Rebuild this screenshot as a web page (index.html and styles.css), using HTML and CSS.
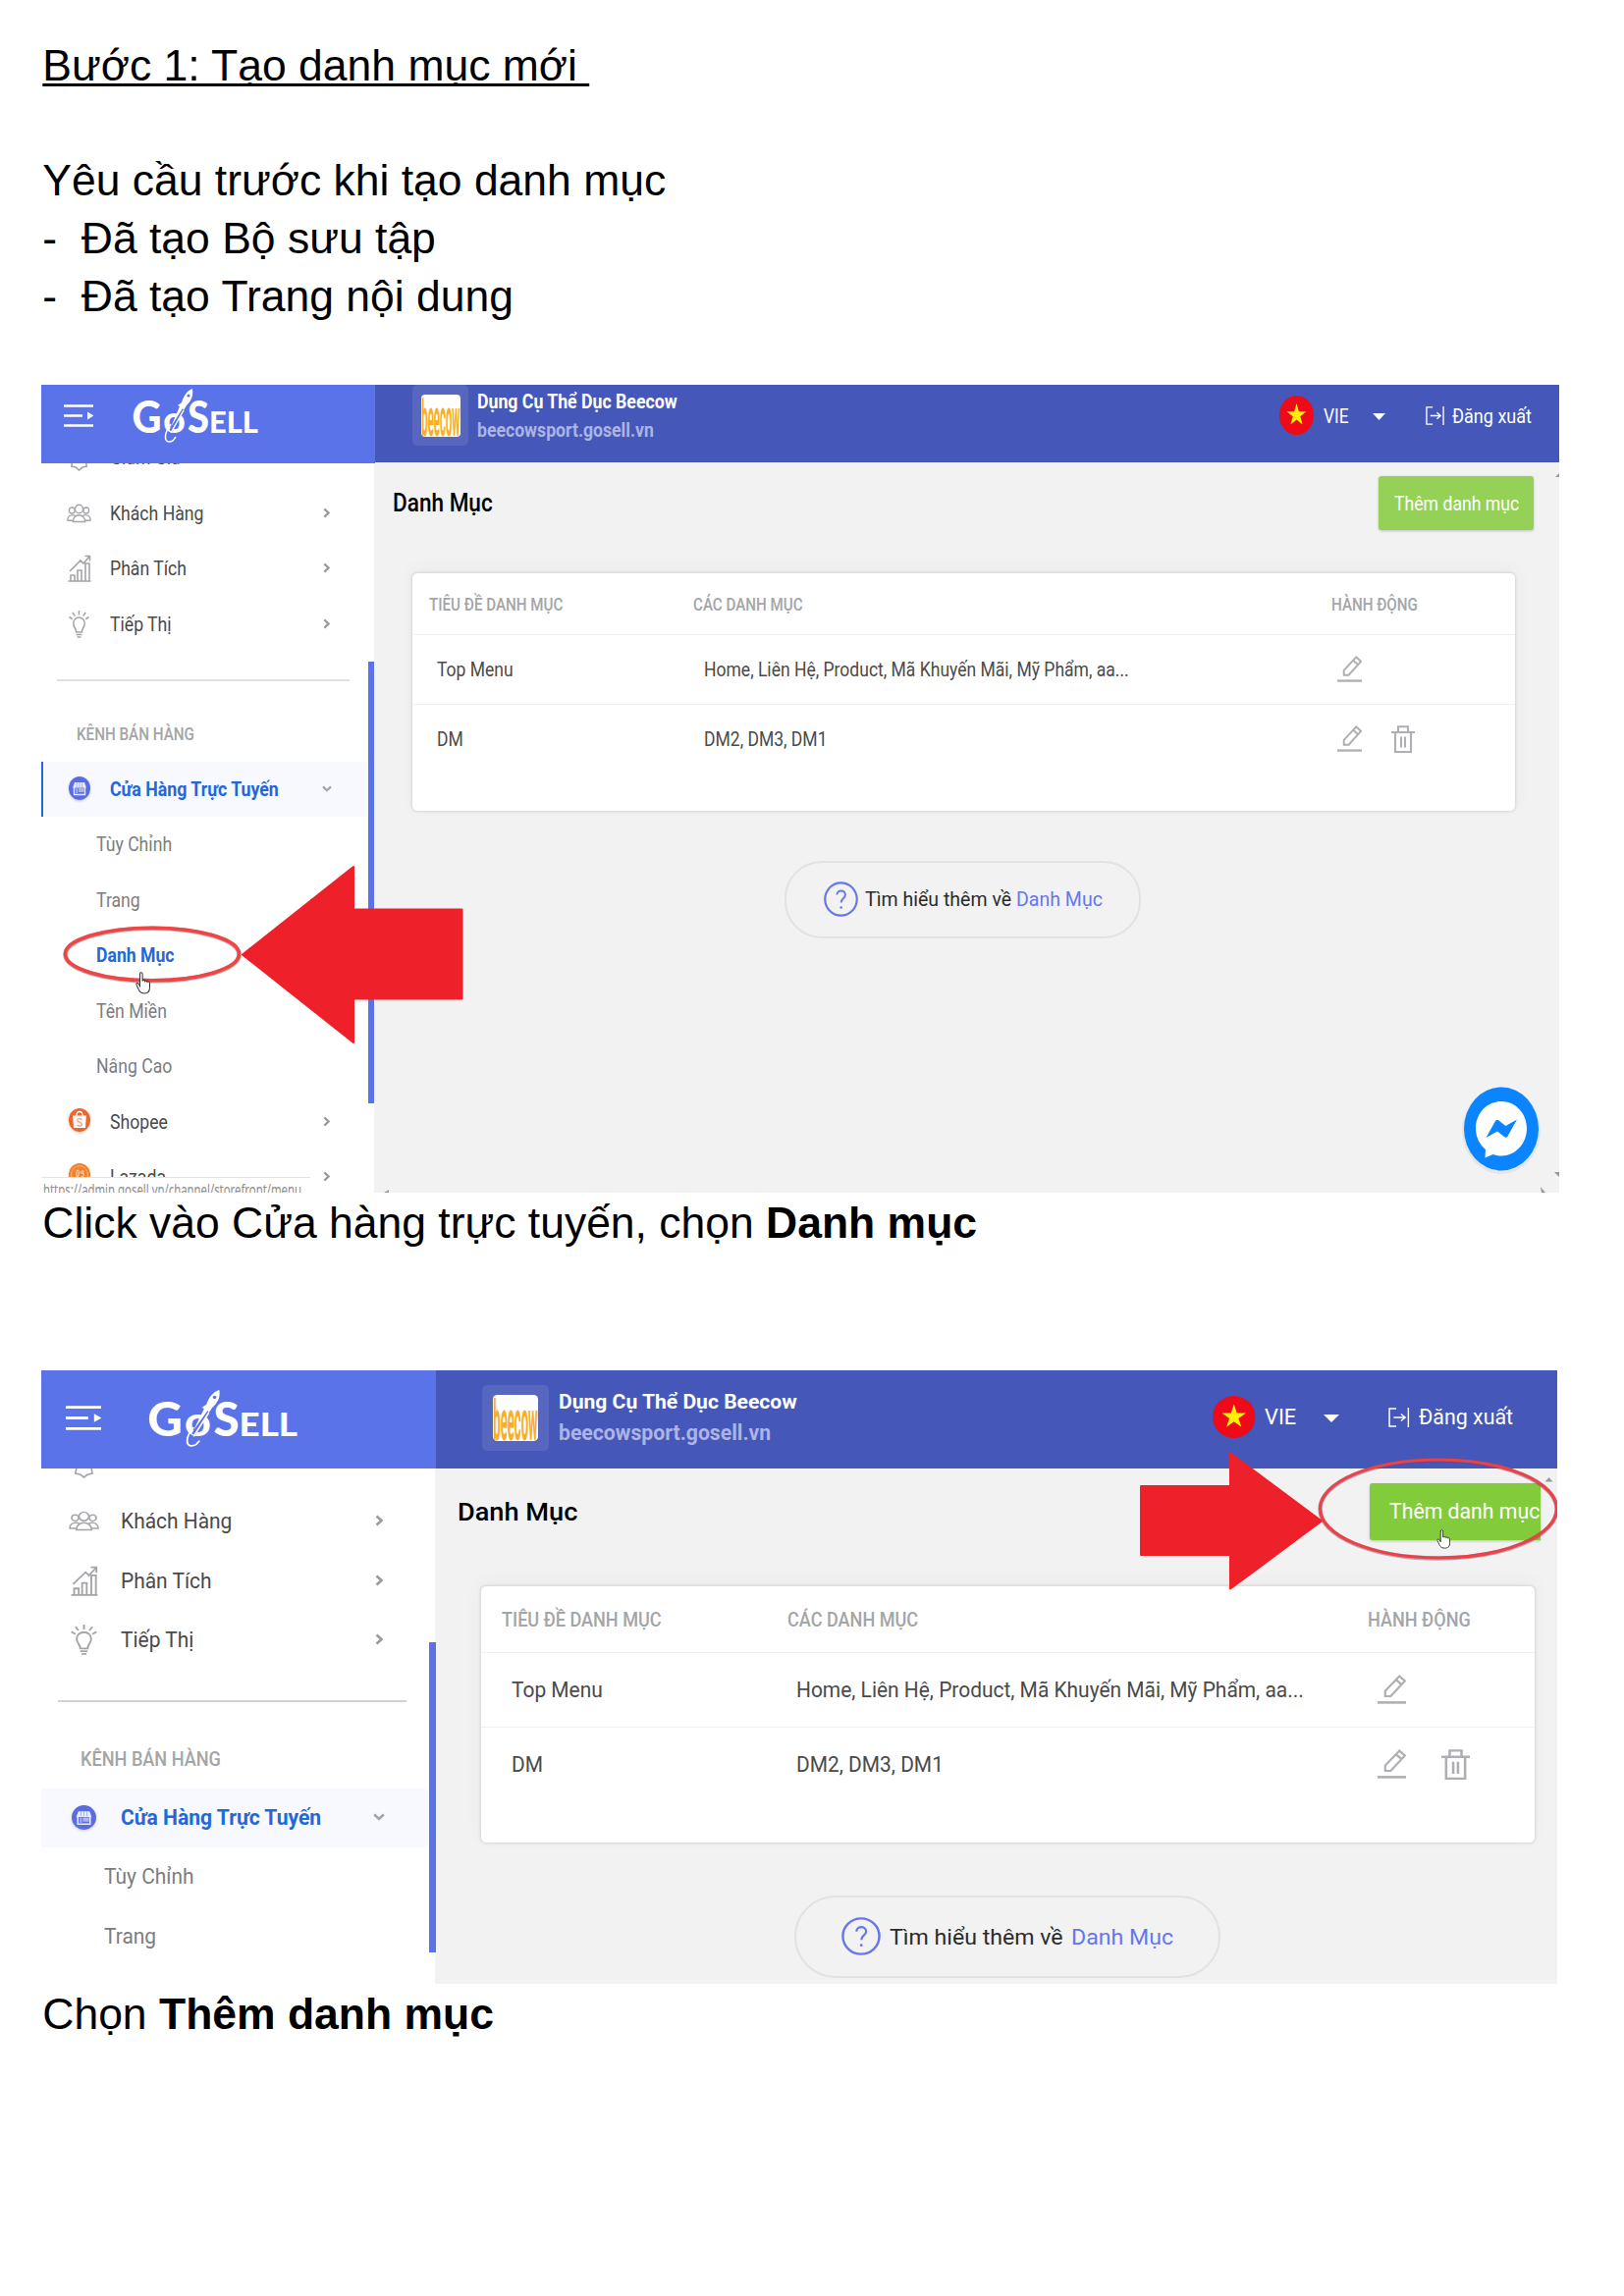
FILE: index.html
```html
<!DOCTYPE html>
<html lang="vi">
<head>
<meta charset="utf-8">
<title>Tạo danh mục mới</title>
<link rel="stylesheet" href="styles.css">
</head>
<body>
<svg class="sprite" aria-hidden="true">
  <symbol id="menu" viewBox="0 0 30 23" preserveAspectRatio="none"><path d="M0 1.500h30M0 11.500h19M0 21.500h30" stroke="#fff" stroke-width="2.600" fill="none"/><path d="M24 7.500l6.500 4-6.500 4z" fill="#fff"/></symbol>
  <symbol id="rocket" viewBox="0 0 127 56" preserveAspectRatio="none">
    <path d="M50 20L38 43" stroke="#5b73e8" stroke-width="3.600"/>
    <path d="M60 0c-6 2-9 8-11 14l-4 3 2 1-9 21 12-19 1 2 3-5c5-5 7-10 6-17z" fill="#fff"/>
    <circle cx="56" cy="7" r="1.600" fill="#5b73e8"/>
    <path d="M51 22L38 45M38 36c-7 9-7 18-2 18 4 0 5-2 7-5" fill="none" stroke="#fff" stroke-width="1.500"/>
  </symbol>
  <symbol id="people" viewBox="0 0 26 20" preserveAspectRatio="none"><g fill="#fff" stroke="#a3a5a8" stroke-width="1.400"><circle cx="5.500" cy="7" r="3"/><circle cx="20.500" cy="7" r="3"/><path d="M.8 17.500c0-7 8-7 9-3.500M25.200 17.500c0-7-8-7-9-3.500M.8 17.200h6M25.200 17.200h-6"/><circle cx="13" cy="5.500" r="4.200"/><path d="M6.500 18.500c0-9 13-9 13 0z"/></g></symbol>
  <symbol id="chart" viewBox="0 0 24 28" preserveAspectRatio="none"><g fill="none" stroke="#a3a5a8" stroke-width="1.600"><path d="M.5 27h23M3 27v-6h4v6M10 27V16h4v11M18 27V9h4v18M2 17L13 6l3 3 6-7M17.500 1.500h5v5"/></g></symbol>
  <symbol id="bulb" viewBox="0 0 22 28" preserveAspectRatio="none"><g fill="none" stroke="#a3a5a8" stroke-width="1.600"><path d="M8 22c0-4-3-4.500-3-9a6 6 0 0 1 12 0c0 4.500-3 5-3 9zM8 24.500h6M9 27h4M11 0v4.500M4 2l2.500 3.500M18 2l-2.500 3.500M.5 6.500l3.500 2.200M21.500 6.500L18 8.700"/></g></symbol>
  <symbol id="tag" viewBox="0 0 22 22" preserveAspectRatio="none"><path d="M4 1h14v4l3 3-2 4 1 5-5 1-4 3-4-3-5-1 1-5-2-4 3-3z" fill="none" stroke="#a3a5a8" stroke-width="1.700"/></symbol>
  <symbol id="right" viewBox="0 0 8 12" preserveAspectRatio="none"><path d="M1.500 1.500L6.500 6l-5 4.500" fill="none" stroke="#9a9c9e" stroke-width="2.600"/></symbol>
  <symbol id="down" viewBox="0 0 12 8" preserveAspectRatio="none"><path d="M1.200 1.500L6 6l4.800-4.500" fill="none" stroke="#a3a5a8" stroke-width="2.600"/></symbol>
  <symbol id="store" viewBox="0 0 24 24" preserveAspectRatio="none"><circle cx="12" cy="12" r="12" fill="#5b6be0"/><path d="M6.500 6h11l2 5.500h-15z" fill="#e9ecff"/><path d="M6 11v7.500h12V11" fill="none" stroke="#e9ecff" stroke-width="1.500"/><path d="M8 12h2v5H8zM11 12h6v4h-6z" fill="#a9b3f2"/><path d="M9 6v5M12 6v5M15 6v5" stroke="#8f9bee" stroke-width=".7"/></symbol>
  <symbol id="shopee" viewBox="0 0 24 24" preserveAspectRatio="none"><circle cx="12" cy="12" r="12" fill="#f0642d"/><path d="M4.500 7.500h15l-1 12.500h-13z" fill="#fff"/><path d="M8.500 8c0-6 7-6 7 0" fill="none" stroke="#fff" stroke-width="1.300"/><path d="M14.500 11.500c-1.500-1.500-5-1.200-5 .8 0 2.500 5.200 1.500 5.200 4 0 2.200-3.800 2.200-5.500.7" fill="none" stroke="#f49a7a" stroke-width="1.200"/></symbol>
  <symbol id="lazada" viewBox="0 0 24 24" preserveAspectRatio="none"><circle cx="12" cy="12" r="12" fill="#f5802a"/><circle cx="12" cy="12" r="9.300" fill="none" stroke="#f9b27c" stroke-width="1"/><path d="M8 15c4-1 4-8 2-8s-2 9 1 9M13 10c2-4 5-2 2 0 3 0 2 5-2 4" fill="none" stroke="#fbd2b0" stroke-width="1.200"/></symbol>
  <symbol id="flag" viewBox="0 0 40 40" preserveAspectRatio="none"><circle cx="20" cy="20" r="20" fill="#ee0a19"/><path d="M20 8l2.700 8.200h8.600l-7 5.100 2.700 8.300-7-5.100-7 5.100 2.700-8.300-7-5.100h8.600z" fill="#ffef00"/></symbol>
  <symbol id="caret" viewBox="0 0 14 8" preserveAspectRatio="none"><path d="M0 0h14L7 8z" fill="#fff"/></symbol>
  <symbol id="logout" viewBox="0 0 20 20" preserveAspectRatio="none"><path d="M7.500 1H1v18h6.500M5 10h10M12 6.500l4 3.500-4 3.500M19 0v20" fill="none" stroke="#fff" stroke-width="1.400"/></symbol>
  <symbol id="edit" viewBox="0 0 26 28" preserveAspectRatio="none"><g fill="none" stroke="#adafb2" stroke-width="2"><path d="M0 26.500h26" stroke-width="2.400"/><path d="M7 20.500v-5L20 1.500l5 4.500-13 14.500zM17 5l4.500 4"/></g></symbol>
  <symbol id="trash" viewBox="0 0 24 28" preserveAspectRatio="none"><g fill="none" stroke="#adafb2" stroke-width="2.100"><path d="M0 7h24M4 7v20h16V7M7 6.500V1.200h10v5.300M10 11.500v11M14 11.500v11"/></g></symbol>
  <symbol id="help" viewBox="0 0 36 36" preserveAspectRatio="none"><circle cx="18" cy="18" r="16.700" fill="none" stroke="#6577ea" stroke-width="2.200"/><path d="M13.800 13.500c0-5.500 8.800-5.500 8.800 0 0 3.500-4.400 3.500-4.400 8" fill="none" stroke="#6577ea" stroke-width="2"/><circle cx="18.200" cy="26.500" r="1.300" fill="#6577ea"/></symbol>
  <symbol id="hand" viewBox="0 0 16 22" preserveAspectRatio="none"><path d="M5 14V2.200c0-2 2.600-2 2.600 0V9c.5-1.200 2.300-1 2.500.3.600-1 2.300-.7 2.400.6.800-.8 2.500-.4 2.500 1.100v4c0 4-1.500 6-5.500 6-4.500 0-5-2-8-8.500-.6-1.500 1.500-2 2.300-.6z" fill="#fff" stroke="#333" stroke-width="1"/></symbol>
</svg>

<main class="page">
  <h1 class="line title">Bước 1: Tạo danh mục mới&nbsp;</h1>
  <p class="line lead">Yêu cầu trước khi tạo danh mục</p>
  <p class="line">-&nbsp; Đã tạo Bộ sưu tập</p>
  <p class="line">-&nbsp; Đã tạo Trang nội dung</p>

  <section class="shot shot-a">
    <aside class="side">
      <header class="side-top">
        <svg class="i-menu"><use href="#menu"/></svg>
        <svg class="i-logo" viewBox="0 0 127 56" preserveAspectRatio="none">
          <text x="-1.500" y="45" font-size="46" textLength="30" lengthAdjust="spacingAndGlyphs">G</text>
          <text x="30" y="45" font-size="39" font-weight="700" textLength="23" lengthAdjust="spacingAndGlyphs">o</text>
          <text x="55" y="45" font-size="46" textLength="22" lengthAdjust="spacingAndGlyphs">S</text>
          <text x="77" y="44.500" font-size="31" textLength="50" lengthAdjust="spacingAndGlyphs">ELL</text>
          <use href="#rocket" width="127" height="56"/>
        </svg>
      </header>
      <nav class="nav">
        <div class="row first"><svg class="i-tag"><use href="#tag"/></svg><span class="t">Giảm Giá</span></div>
        <div class="row"><svg class="i-people"><use href="#people"/></svg><span class="t">Khách Hàng</span><svg class="i-right"><use href="#right"/></svg></div>
        <div class="row"><svg class="i-chart"><use href="#chart"/></svg><span class="t">Phân Tích</span><svg class="i-right"><use href="#right"/></svg></div>
        <div class="row"><svg class="i-bulb"><use href="#bulb"/></svg><span class="t">Tiếp Thị</span><svg class="i-right"><use href="#right"/></svg></div>
        <hr class="rule">
        <div class="group"><span class="t">KÊNH BÁN HÀNG</span></div>
        <div class="row low active"><svg class="i-round"><use href="#store"/></svg><span class="t">Cửa Hàng Trực Tuyến</span><svg class="i-down"><use href="#down"/></svg></div>
        <div class="sub"><span class="t">Tùy Chỉnh</span></div>
        <div class="sub"><span class="t">Trang</span></div>
        <div class="sub current"><span class="t">Danh Mục</span></div>
        <div class="sub"><span class="t">Tên Miền</span></div>
        <div class="sub"><span class="t">Nâng Cao</span></div>
        <div class="row low"><svg class="i-round"><use href="#shopee"/></svg><span class="t">Shopee</span><svg class="i-right"><use href="#right"/></svg></div>
        <div class="row low"><svg class="i-round"><use href="#lazada"/></svg><span class="t">Lazada</span><svg class="i-right"><use href="#right"/></svg></div>
      </nav>
      <i class="thumb"></i>
      <div class="status"><span class="t">https://admin.gosell.vn/channel/storefront/menu</span></div>
    </aside>
    <div class="main">
      <header class="bar">
        <span class="tile"><svg class="i-shop" viewBox="0 0 40 44" preserveAspectRatio="none"><rect width="40" height="44" rx="4"/><text x=".3" y="10.100" transform="scale(1 4.300)" font-size="12.500" textLength="39.400" lengthAdjust="spacingAndGlyphs">beecow</text></svg></span>
        <div class="shop"><b><span class="t">Dụng Cụ Thể Dục Beecow</span></b><small><span class="t">beecowsport.gosell.vn</span></small></div>
        <svg class="i-flag"><use href="#flag"/></svg><span class="lang"><span class="t">VIE</span></span><svg class="i-caret"><use href="#caret"/></svg>
        <svg class="i-logout"><use href="#logout"/></svg><span class="t exit">Đăng xuất</span>
      </header>
      <div class="head"><h2><span class="t">Danh Mục</span></h2><a class="add"><span class="t">Thêm danh mục</span></a></div>
      <div class="card">
        <div class="tr th"><span class="t">TIÊU ĐỀ DANH MỤC</span><span class="t">CÁC DANH MỤC</span><span class="t">HÀNH ĐỘNG</span></div>
        <div class="tr td"><span class="t">Top Menu</span><span class="t">Home, Liên Hệ, Product, Mã Khuyến Mãi, Mỹ Phẩm, aa...</span><span class="acts"><svg class="i-edit"><use href="#edit"/></svg></span></div>
        <div class="tr td"><span class="t">DM</span><span class="t">DM2, DM3, DM1</span><span class="acts"><svg class="i-edit"><use href="#edit"/></svg><svg class="i-trash"><use href="#trash"/></svg></span></div>
      </div>
      <div class="pill"><svg class="i-help"><use href="#help"/></svg><span class="t">Tìm hiểu thêm về</span><a class="t">Danh Mục</a></div>
    </div>
    <svg class="marks" viewBox="0 0 1546 823">
      <ellipse cx="113" cy="580.500" rx="88.500" ry="26.800" fill="none" stroke="#8a4a4a" stroke-opacity=".45" stroke-width="4.600"/>
      <ellipse cx="113" cy="580" rx="88.500" ry="26.800" fill="none" stroke="#f04545" stroke-width="3.600"/>
      <path d="M205 580.500L318 491v43.500h110.500v91H318V670z" fill="#ee2029" stroke="#ee2029" stroke-width="2" stroke-linejoin="round"/>
      <use href="#hand" x="95.500" y="598" width="16" height="23"/>
      <ellipse cx="1487" cy="760" rx="40" ry="44" fill="#000" opacity=".05"/>
      <ellipse cx="1487" cy="758" rx="38" ry="42.500" fill="#0a84ff"/>
      <path d="M1487 730c14.500 0 26 12 26 27.500s-11.500 28-26 28c-3 0-6-.6-8.500-1.500l-8 3.500.5-8.500c-6-5-10-12.500-10-21.500 0-15.500 11.500-27.500 26-27.500z" fill="#fff"/>
      <path d="M1471.500 767l9.500-17c1-1.500 2.500-1.500 3.500-.5l7 5.500 11.500-6.500-9.500 17c-1 1.500-2.500 1.500-3.500.5l-7-5.500z" fill="#0a84ff"/>
      <path d="M1546 90v4h-4zM1541 802h5v5zM1527 817l5 6h-4zM349 823l5-3v3z" fill="#999"/>
    </svg>
  </section>

  <p class="line">Click vào Cửa hàng trực tuyến, chọn <strong>Danh mục</strong></p>

  <section class="shot shot-b">
    <aside class="side">
      <header class="side-top">
        <svg class="i-menu"><use href="#menu"/></svg>
        <svg class="i-logo" viewBox="0 0 127 56" preserveAspectRatio="none">
          <text x="-1.500" y="45" font-size="46" textLength="30" lengthAdjust="spacingAndGlyphs">G</text>
          <text x="30" y="45" font-size="39" font-weight="700" textLength="23" lengthAdjust="spacingAndGlyphs">o</text>
          <text x="55" y="45" font-size="46" textLength="22" lengthAdjust="spacingAndGlyphs">S</text>
          <text x="77" y="44.500" font-size="31" textLength="50" lengthAdjust="spacingAndGlyphs">ELL</text>
          <use href="#rocket" width="127" height="56"/>
        </svg>
      </header>
      <nav class="nav">
        <div class="row first"><svg class="i-tag"><use href="#tag"/></svg></div>
        <div class="row"><svg class="i-people"><use href="#people"/></svg><span class="t">Khách Hàng</span><svg class="i-right"><use href="#right"/></svg></div>
        <div class="row"><svg class="i-chart"><use href="#chart"/></svg><span class="t">Phân Tích</span><svg class="i-right"><use href="#right"/></svg></div>
        <div class="row"><svg class="i-bulb"><use href="#bulb"/></svg><span class="t">Tiếp Thị</span><svg class="i-right"><use href="#right"/></svg></div>
        <hr class="rule">
        <div class="group"><span class="t">KÊNH BÁN HÀNG</span></div>
        <div class="row low active"><svg class="i-round"><use href="#store"/></svg><span class="t">Cửa Hàng Trực Tuyến</span><svg class="i-down"><use href="#down"/></svg></div>
        <div class="sub"><span class="t">Tùy Chỉnh</span></div>
        <div class="sub"><span class="t">Trang</span></div>
      </nav>
      <i class="thumb"></i>
    </aside>
    <div class="main">
      <header class="bar">
        <span class="tile"><svg class="i-shop" viewBox="0 0 40 44" preserveAspectRatio="none"><rect width="40" height="44" rx="4"/><text x=".3" y="10.100" transform="scale(1 4.300)" font-size="12.500" textLength="39.400" lengthAdjust="spacingAndGlyphs">beecow</text></svg></span>
        <div class="shop"><b><span class="t">Dụng Cụ Thể Dục Beecow</span></b><small><span class="t">beecowsport.gosell.vn</span></small></div>
        <svg class="i-flag"><use href="#flag"/></svg><span class="lang"><span class="t">VIE</span></span><svg class="i-caret"><use href="#caret"/></svg>
        <svg class="i-logout"><use href="#logout"/></svg><span class="t exit">Đăng xuất</span>
      </header>
      <div class="head"><h2><span class="t">Danh Mục</span></h2><a class="add"><span class="t">Thêm danh mục</span></a></div>
      <div class="card">
        <div class="tr th"><span class="t">TIÊU ĐỀ DANH MỤC</span><span class="t">CÁC DANH MỤC</span><span class="t">HÀNH ĐỘNG</span></div>
        <div class="tr td"><span class="t">Top Menu</span><span class="t">Home, Liên Hệ, Product, Mã Khuyến Mãi, Mỹ Phẩm, aa...</span><span class="acts"><svg class="i-edit"><use href="#edit"/></svg></span></div>
        <div class="tr td"><span class="t">DM</span><span class="t">DM2, DM3, DM1</span><span class="acts"><svg class="i-edit"><use href="#edit"/></svg><svg class="i-trash"><use href="#trash"/></svg></span></div>
      </div>
      <div class="pill"><svg class="i-help"><use href="#help"/></svg><span class="t">Tìm hiểu thêm về</span><a class="t">Danh Mục</a></div>
    </div>
    <svg class="marks" viewBox="0 0 1544 625">
      <ellipse cx="1423" cy="141.500" rx="120.500" ry="50" fill="none" stroke="#6a4a6a" stroke-opacity=".45" stroke-width="4.400"/>
      <ellipse cx="1423" cy="141" rx="120.500" ry="50" fill="none" stroke="#ee4146" stroke-width="3.200"/>
      <path d="M1120 118h91V84.500l93 69-93 69V188h-91z" fill="#ee2029" stroke="#ee2029" stroke-width="2" stroke-linejoin="round"/>
      <use href="#hand" x="1420.500" y="162" width="15" height="20"/>
      <path d="M1531.500 113.500h8l-4-4.500z" fill="#999"/>
    </svg>
  </section>

  <p class="line">Chọn <strong>Thêm danh mục</strong></p>
</main>
</body>
</html>
```
FILE: styles.css
```css
* { box-sizing: border-box; }
body { margin: 0; background: #fff; font-family: "Liberation Sans", Arial, sans-serif; color: #000; }
svg { display: block; flex: none; overflow: visible; }
.sprite { display: none; }

.page { width: 1654px; padding: 37.900px 0 0 43.300px; }
.line { margin: 0; height: 58.800px; line-height: 58.800px; font-size: 44.480px; font-weight: 400; white-space: nowrap; }
.title { text-decoration: underline; text-decoration-thickness: 3px; text-underline-offset: 3px; text-decoration-skip-ink: none; }
.lead { margin-top: 58.800px; }

.shot { position: relative; display: flex; overflow: hidden; margin-left: -1.300px; font-family: Roboto, sans-serif; font-size: var(--fs); background: #fff; }
.shot-a {
  width: 1546px; height: 823px; margin-top: 60.100px; margin-bottom: 2.500px;
  --fs: 20.800px; --side: 340px; --top: 80px; --row: 56.600px; --low: 56.400px; --squeeze: .848;
}
.shot-b {
  width: 1544px; height: 625px; margin-top: 119.500px; margin-bottom: 2.500px;
  --fs: 21.800px; --side: 402px; --top: 100px; --row: 60.500px; --low: 60.500px; --squeeze: .960;
}
/* condensed labels: each area sets its own horizontal squeeze */
.t { display: inline-block; white-space: nowrap; transform: scaleX(var(--squeeze)); transform-origin: 0 50%; }
.shot-a .group { --squeeze: .813; }
.shot-a .active { --squeeze: .853; }
.shot-a .status { --squeeze: .668; }
.shot-a .shop b { --squeeze: .907; }
.shot-a .shop small { --squeeze: .882; }
.shot-a .lang { --squeeze: .867; }
.shot-a .exit { --squeeze: .900; }
.shot-a h2 { --squeeze: .903; }
.shot-a .add { --squeeze: .882; }
.shot-a .th { --squeeze: .811; }
.shot-a .td { --squeeze: .876; }
.shot-a .pill { --squeeze: .930; }
.shot-b .group { --squeeze: .929; }
.shot-b .active { --squeeze: .967; }
.shot-b .shop b { --squeeze: 1.004; }
.shot-b .shop small { --squeeze: .986; }
.shot-b .lang { --squeeze: 1; }
.shot-b .exit { --squeeze: .980; }
.shot-b h2 { --squeeze: 1.025; }
.shot-b .add { --squeeze: .975; }
.shot-b .th { --squeeze: .927; }
.shot-b .pill { --squeeze: 1.028; }

/* sidebar */
.side { position: relative; flex: none; width: var(--side); }
.side-top { position: relative; z-index: 1; display: flex; height: var(--top); background: #5b73e8; }
.i-logo { fill: #fff; font-family: Lato, sans-serif; font-weight: 900; }
.shot-a .i-menu { width: 30px; height: 23px; margin: 20px 0 0 23px; }
.shot-a .i-logo { width: 127px; height: 56px; margin: 4px 0 0 41px; }
.shot-b .i-menu { width: 36px; height: 25px; margin: 36px 0 0 25px; }
.shot-b .i-logo { width: 151px; height: 59px; margin: 20px 0 0 49px; }
.row { display: grid; align-items: center; justify-items: center; height: var(--row); color: #4a4a4a; }
.row .t { justify-self: start; }
.low { height: var(--low); }
.shot-a .row { grid-template-columns: 18.500px 40px 11.500px 214px 13px; }
.shot-b .row { grid-template-columns: 22.500px 42px 16.500px 256px 14px; }
.row > :nth-child(1) { grid-column: 2; }
.row > :nth-child(2) { grid-column: 4; }
.row > :nth-child(3) { grid-column: 5; }
.shot-a .first { margin-top: -34px; }
.shot-b .first { margin-top: -36.700px; }
.i-tag { width: 19px; height: 22px; align-self: end; margin-bottom: 15px; }
.i-people { width: 25px; height: 20px; }
.i-chart { width: 24px; height: 28px; }
.i-bulb { width: 21px; height: 28px; }
.i-round { width: 22px; height: 24px; margin-top: -3px; border-radius: 50%; box-shadow: 0 1px 3px rgba(0,0,0,.2); }
.i-right { width: 7px; height: 11px; margin-top: -1px; }
.i-down { width: 10px; height: 7px; margin-top: -2px; }
.shot-b .i-tag { width: 21px; margin-bottom: 14px; }
.shot-b .i-people { width: 31px; height: 21px; }
.shot-b .i-chart { width: 28px; height: 31px; }
.shot-b .i-bulb { width: 27px; height: 31px; }
.shot-b .i-round { width: 25px; height: 25px; margin-top: -1px; }
.shot-b .i-right { width: 8px; height: 12px; }
.shot-b .i-down { width: 12px; height: 8px; }
.rule { border: 0; height: 1.500px; background: #e0e0e0; }
.shot-a .rule { width: 298px; margin: 28px 0 25px 16px; }
.shot-b .rule { width: 355px; margin: 31px 0 29.500px 17px; background: #d2d2d2; }
.group { color: #a3a5a7; font-weight: 500; white-space: nowrap; }
.shot-a .group { height: 57.200px; line-height: 58.500px; padding-left: 35.500px; font-size: 18.700px; }
.shot-b .group { height: 58.500px; line-height: 59.500px; padding-left: 39.500px; font-size: 19.500px; }
.active { margin-right: 8px; background: #f7f9fe; color: #2268d8; font-weight: 700; }
.shot-a .active { box-shadow: inset 2px 0 #2268d8; }
.sub { height: var(--low); line-height: var(--low); color: #7c7d80; }
.shot-a .sub { padding-left: 56px; }
.shot-b .sub { padding-left: 64px; }
.current { color: #2268d8; font-weight: 700; }
.thumb { position: absolute; z-index: 1; background: #5b73e8; }
.shot-a .thumb { left: 333px; top: 282px; width: 6px; height: 450px; }
.shot-b .thumb { left: 394.500px; top: 277px; width: 7px; height: 316px; }
.status { position: absolute; left: 0; bottom: 0; z-index: 1; width: 274px; height: 16px; overflow: hidden; padding-left: 1.500px; background: #fff; border-top: 1.500px solid #e4e4e4; color: #8d8d8d; font: 17px/24px "Noto Sans", sans-serif; }

/* main column */
.main { flex: 1; min-width: 0; margin-left: -1.500px; background: #f2f2f2; }
.bar { display: grid; align-items: center; margin-left: 1.500px; background: #4557b9; color: #fff; }
.shot-a .bar { height: 79px; grid-template-columns: 57px 826px 45px 50px 54px 27px 1fr; padding: 0 0 16px 38px; }
.shot-b .bar { height: 100px; grid-template-columns: 67.500px 676px 53.500px 60px 65.500px 31.500px 1fr; padding: 0 0 3px 47px; }
.tile { display: grid; place-items: center; background: #5767bf; border-radius: 5px; }
.i-shop { font-family: Roboto, sans-serif; font-weight: 700; }
.i-shop rect { fill: #fff; }
.i-shop text { fill: #f9ae25; }
.shot-a .tile { width: 57px; height: 62px; }
.shot-a .i-shop { width: 40px; height: 43px; }
.shot-b .tile { width: 67.500px; height: 67px; }
.shot-b .i-shop { width: 46px; height: 47px; }
.shop { align-self: start; }
.shop b, .shop small { display: block; font-weight: 700; white-space: nowrap; }
.shop small { color: #acb4e4; }
.shot-a .shop { padding: 3px 0 0 9px; font-size: 19.500px; line-height: 29.300px; }
.shot-a .shop small { font-size: 20px; }
.shot-b .shop { padding: 17px 0 0 10.500px; font-size: 21px; line-height: 31.300px; }
.shot-b .shop small { font-size: 21.500px; }
.shot-a .i-flag { width: 35px; height: 40px; }
.shot-a .i-caret { width: 13px; height: 7px; margin-top: 2px; }
.shot-a .i-logout { width: 19px; height: 19px; }
.shot-a .exit, .shot-a .lang { font-size: 20px; margin-top: 1px; }
.shot-b .i-flag { width: 43.500px; height: 43px; margin-top: -1px; }
.shot-b .i-caret { width: 16px; height: 8px; margin-top: 1px; }
.shot-b .i-logout { width: 21.500px; height: 20px; }
.shot-b .exit, .shot-b .lang { margin-top: -1px; }
.head { display: flex; justify-content: space-between; }
h2 { margin: 0; font-weight: 500; white-space: nowrap; }
.add { display: block; color: #fff; white-space: nowrap; border-radius: 3px; box-shadow: 0 1px 3px rgba(0,0,0,.2); }
.shot-a .head { padding: 14.500px 26px 0 19px; }
.shot-a h2 { font-size: 25px; line-height: 56px; height: 54.500px; }
.shot-a .add { width: 158.500px; height: 54.500px; line-height: 56px; padding-left: 16.500px; background: #95d157; font-size: 20px; }
.shot-b .head { padding: 15px 17px 0 23.500px; height: 75px; }
.shot-b h2 { font-size: 26.500px; line-height: 58px; }
.shot-b .add { width: 174px; height: 58px; line-height: 58px; padding-left: 19.500px; background: #82cc3b; border-radius: 3px 0 0 3px; }
.card { background: #fff; border: 1px solid #dedede; border-radius: 6px; box-shadow: 0 0 3px rgba(0,0,0,.1), 0 -5px 20px rgba(0,0,0,.03); }
.tr { display: grid; align-items: center; }
.tr + .tr { border-top: 1.500px solid #f0f0f0; }
.tr > * { justify-self: start; }
.th { color: #a3a5a7; font-weight: 500; }
.td { color: #4a4a4a; }
.acts { display: flex; }
.shot-a .card { width: 1125px; height: 243.500px; margin: 43.500px 0 0 38px; }
.shot-a .th { height: 62px; padding-top: 2px; grid-template-columns: 269px 649.500px 1fr; padding-left: 17.500px; font-size: 18.700px; }
.shot-a .td { height: 71px; grid-template-columns: 272px 644.500px 1fr; padding-left: 25.500px; font-size: 20px; }
.shot-a .i-edit { width: 25px; height: 27px; margin-top: -1px; }
.shot-a .i-trash { width: 24px; height: 28px; margin-left: 30px; margin-top: -1px; }
.shot-b .card { width: 1075px; height: 263px; margin: 44.500px 0 0 46.500px; }
.shot-b .th { height: 67px; padding-top: 2px; grid-template-columns: 291px 591px 1fr; padding-left: 21px; font-size: 19.500px; }
.shot-b .td { height: 76px; grid-template-columns: 290px 592px 1fr; padding-left: 31px; }
.shot-b .i-edit { width: 29px; height: 30px; margin-top: -1px; }
.shot-b .i-trash { width: 29px; height: 31px; margin-left: 36px; margin-top: -1px; }
.pill { display: grid; align-items: center; justify-items: start; border: 2px solid #e2e2e2; color: #2b2b2b; }
.pill a { color: #6577ea; }
.shot-a .pill { width: 363px; height: 79px; margin: 50px 0 0 418.500px; border-radius: 38px; padding-left: 37.500px; grid-template-columns: 42.500px 154px 1fr; font-size: 21px; }
.shot-a .i-help { width: 35px; height: 36px; }
.shot-b .pill { width: 434px; height: 84px; margin: 52.500px 0 0 366.500px; border-radius: 42px; padding-left: 46px; grid-template-columns: 49px 185px 1fr; font-size: 22.500px; }
.shot-b .i-help { width: 40px; height: 39px; }
.marks { position: absolute; left: 0; top: 0; width: 100%; height: 100%; z-index: 2; pointer-events: none; }
```
